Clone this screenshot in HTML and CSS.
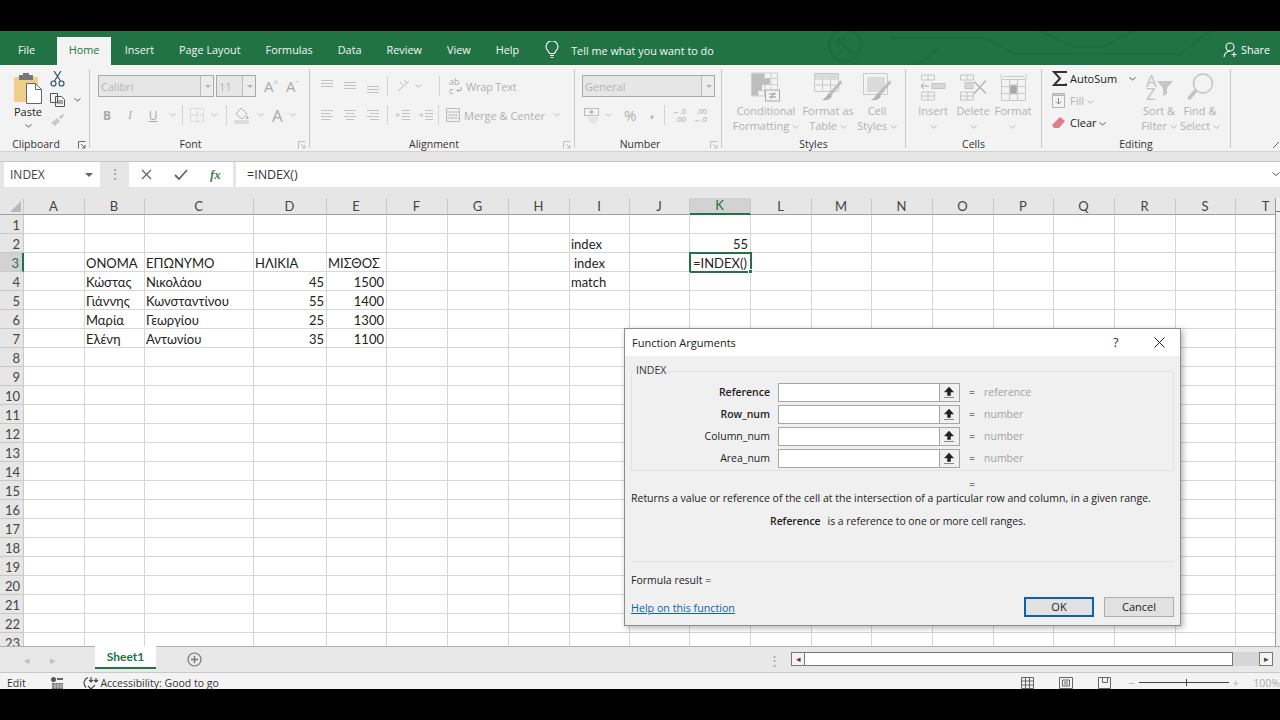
FILE: index.html
```html
<!DOCTYPE html>
<html lang="en">
<head>
<meta charset="utf-8">
<title>Excel - Function Arguments</title>
<link rel="stylesheet" href="styles.css">
</head>
<body>
<div class="app">
<header class="tabs">
  <svg class="circuit" width="480" height="34" viewBox="0 0 480 34" fill="none" stroke="#1e6d41" stroke-width="2.5"><circle cx="45" cy="14" r="16"/><path d="M38 8l14 14M38 8h8M38 8v8"/><path d="M90 7h95l30 16h165l30-23M240 0l35 16h28l30-16M118 34l22-18"/></svg>
  <nav class="tablist">
    <span class="tab">File</span><span class="tab active">Home</span><span class="tab">Insert</span><span class="tab">Page Layout</span><span class="tab">Formulas</span><span class="tab">Data</span><span class="tab">Review</span><span class="tab">View</span><span class="tab">Help</span>
    <svg class="bulb" width="14" height="18" viewBox="0 0 14 18" fill="none" stroke="#fff" stroke-width="1.1"><path d="M4.5 12.5C4 10 1 9 1 5.8a6 6 0 0 1 12 0C13 9 10 10 9.500 12.500zM5 14.500h4M5.700 16.500h2.600"/></svg>
    <span class="tell">Tell me what you want to do</span>
  </nav>
  <div class="share">
    <svg width="15" height="16" viewBox="0 0 15 16" fill="none" stroke="#fff" stroke-width="1.100"><circle cx="7" cy="5" r="4"/><path d="M1 15c.5-3.500 2.500-5.500 6-6M11 10v5M8.500 12.500h5"/></svg>
    <span>Share</span>
  </div>
</header>

<section class="ribbon">
  <div class="grp g-clip">
    <div class="body clip-body">
      <div class="paste">
        <svg width="30" height="31" viewBox="0 0 30 31"><rect x="1" y="4" width="24" height="25" rx="1" fill="#f0cf8a"/><rect x="6" y="2" width="14" height="5" fill="#777"/><rect x="10" y="0" width="6" height="4" fill="#777"/><path d="M13.500 10.500h9l6 6v14h-15z" fill="#fff" stroke="#666"/><path d="M22.500 10.500v6h6" fill="none" stroke="#666"/></svg>
        <span class="dark">Paste</span>
        <svg class="chev" width="7" height="4" viewBox="0 0 7 4"><path d="M.5.500l3 2.500 3-2.500" fill="none" stroke="#555"/></svg>
      </div>
      <div class="clip-tools">
        <svg width="15" height="16" viewBox="0 0 15 16" fill="none" stroke="#2f4f6a" stroke-width="1.200"><circle cx="3.500" cy="12.500" r="2.500"/><circle cx="11.500" cy="12.500" r="2.500"/><path d="M4.500 10L11 0M10.500 10L4 0"/></svg>
        <span class="copyline"><svg width="15" height="14" viewBox="0 0 15 14" fill="none" stroke="#555"><path d="M.5.500h7v9h-7zM5.500 3.500h6l3 3v7h-9zM7 8h6M7 10h6"/></svg><svg class="chev" width="7" height="4" viewBox="0 0 7 4"><path d="M.5.500l3 2.500 3-2.500" fill="none" stroke="#555"/></svg></span>
        <svg width="15" height="14" viewBox="0 0 15 14"><path d="M1 10l6-5 3 3-5 5z" fill="#c9c9c9"/><path d="M9 4l4-3 1 1-3 4z" fill="#bdbdbd"/></svg>
      </div>
    </div>
    <div class="lab lab-clip"><span class="lab-t">Clipboard</span><svg class="launch" width="8" height="8" viewBox="0 0 8 8" fill="none" stroke="#666"><path d="M.5 7.500v-7h7M3 3l4 4M7 4v3H4"/></svg></div>
  </div>

  <div class="grp g-font">
    <div class="body">
      <div class="row r1">
        <div class="combo c-font"><span>Calibri</span><i class="drop"></i></div>
        <div class="combo c-size"><span>11</span><i class="drop"></i></div>
        <span class="glyph gA1">A<sup>^</sup></span><span class="glyph gA2">A<sup>ˇ</sup></span>
      </div>
      <div class="row r2">
        <b class="fmt f-b">B</b><em class="fmt f-i">I</em><u class="fmt f-u">U</u>
        <svg class="chev c-u" width="7" height="4" viewBox="0 0 7 4"><path d="M.5.500l3 2.500 3-2.500" fill="none" stroke="#bbb"/></svg>
        <i class="vsep vs1"></i>
        <svg class="ic-border" width="14" height="14" viewBox="0 0 14 14" fill="none" stroke="#c4c4c4" stroke-dasharray="1 1"><path d="M.5.500h13v13H.5zM7 0v14M0 7h14"/></svg>
        <svg class="chev c-b" width="7" height="4" viewBox="0 0 7 4"><path d="M.5.500l3 2.500 3-2.500" fill="none" stroke="#bbb"/></svg>
        <i class="vsep vs2"></i>
        <svg class="ic-fill" width="16" height="17" viewBox="0 0 16 17"><path d="M7 1l6 6-5 5-6-5z" fill="none" stroke="#b5b5b5"/><path d="M13 8l2 4h-3z" fill="#b5b5b5"/><rect x="0" y="13" width="15" height="4" fill="#dcdcdc"/></svg>
        <svg class="chev c-f" width="7" height="4" viewBox="0 0 7 4"><path d="M.5.500l3 2.500 3-2.500" fill="none" stroke="#bbb"/></svg>
        <span class="glyph gA3">A</span>
        <svg class="chev c-a" width="7" height="4" viewBox="0 0 7 4"><path d="M.5.500l3 2.500 3-2.500" fill="none" stroke="#bbb"/></svg>
      </div>
    </div>
    <div class="lab lab-font"><span class="lab-t">Font</span><svg class="launch" width="8" height="8" viewBox="0 0 8 8" fill="none" stroke="#bbb"><path d="M.5 7.500v-7h7M3 3l4 4M7 4v3H4"/></svg></div>
  </div>

  <div class="grp g-align">
    <div class="body">
      <div class="row r1 al-r1">
        <svg class="al" width="14" height="14" viewBox="0 0 14 14" stroke="#c2c2c2"><path d="M1 1.500h12M1 4.500h12M1 7.500h12"/></svg>
        <svg class="al" width="14" height="14" viewBox="0 0 14 14" stroke="#c2c2c2"><path d="M1 3.500h12M1 6.500h12M1 9.500h12"/></svg>
        <svg class="al" width="14" height="14" viewBox="0 0 14 14" stroke="#c2c2c2"><path d="M1 7.500h12M1 10.500h12M1 13.500h12"/></svg>
        <i class="vsep as1"></i>
        <svg class="orient" width="15" height="14" viewBox="0 0 15 14" fill="none" stroke="#bdbdbd"><path d="M2 12L13 2M4 3l3 3M8 1l3 3"/></svg>
        <svg class="chev c-o" width="7" height="4" viewBox="0 0 7 4"><path d="M.5.500l3 2.500 3-2.500" fill="none" stroke="#bbb"/></svg>
        <i class="vsep as2"></i>
        <span class="abc">ab<br>c</span><svg class="ret" width="6" height="6" viewBox="0 0 6 6" fill="none" stroke="#aaa"><path d="M5 0v3.500H1M2.500 2L1 3.500 2.500 5"/></svg><span class="dis wrap">Wrap Text</span>
      </div>
      <div class="row r2 al-r2">
        <svg class="al" width="14" height="12" viewBox="0 0 14 12" stroke="#c2c2c2"><path d="M1 1.500h12M1 4.500h9M1 7.500h12M1 10.500h9"/></svg>
        <svg class="al" width="14" height="12" viewBox="0 0 14 12" stroke="#c2c2c2"><path d="M1 1.500h12M3 4.500h8M1 7.500h12M3 10.500h8"/></svg>
        <svg class="al" width="14" height="12" viewBox="0 0 14 12" stroke="#c2c2c2"><path d="M1 1.500h12M4 4.500h9M1 7.500h12M4 10.500h9"/></svg>
        <i class="vsep as1"></i>
        <svg class="ind" width="14" height="12" viewBox="0 0 14 12" stroke="#c2c2c2" fill="none"><path d="M6 1.500h8M6 4.500h8M6 7.500h8M6 10.500h8M4 6H0M2 4L0 6l2 2"/></svg>
        <svg class="ind2" width="14" height="12" viewBox="0 0 14 12" stroke="#c2c2c2" fill="none"><path d="M6 1.500h8M6 4.500h8M6 7.500h8M6 10.500h8M0 6h4M2 4l2 2-2 2"/></svg>
        <i class="vsep as3"></i>
        <svg class="merge" width="14" height="14" viewBox="0 0 14 14" fill="none" stroke="#bbb"><path d="M.5.500h13v13H.5zM.5 4h13M.5 10h13M3 7h8M4 6L3 7l1 1M10 6l1 1-1 1"/></svg>
        <span class="dis mergetxt">Merge &amp; Center</span>
        <svg class="chev c-m" width="7" height="4" viewBox="0 0 7 4"><path d="M.5.500l3 2.500 3-2.500" fill="none" stroke="#bbb"/></svg>
      </div>
    </div>
    <div class="lab lab-al"><span class="lab-t">Alignment</span><svg class="launch" width="8" height="8" viewBox="0 0 8 8" fill="none" stroke="#bbb"><path d="M.5 7.500v-7h7M3 3l4 4M7 4v3H4"/></svg></div>
  </div>

  <div class="grp g-num">
    <div class="body">
      <div class="row r1">
        <div class="combo c-gen"><span>General</span><i class="drop"></i></div>
      </div>
      <div class="row r2 num-r2">
        <svg class="acc" width="16" height="15" viewBox="0 0 16 15"><rect x=".5" y=".5" width="14" height="7" fill="none" stroke="#bbb"/><circle cx="7.500" cy="4" r="2" fill="#bbb"/><path d="M4 10h10M5 12h9M6 14h6" stroke="#d5d5d5"/></svg>
        <svg class="chev c-acc" width="7" height="4" viewBox="0 0 7 4"><path d="M.5.500l3 2.500 3-2.500" fill="none" stroke="#bbb"/></svg>
        <span class="dis pct">%</span><span class="dis comma">,</span>
        <i class="vsep ns1"></i>
        <span class="dec dec1">←.0<br>.00</span><span class="dec dec2">.00<br>→.0</span>
      </div>
    </div>
    <div class="lab lab-al"><span class="lab-t">Number</span><svg class="launch" width="8" height="8" viewBox="0 0 8 8" fill="none" stroke="#bbb"><path d="M.5 7.500v-7h7M3 3l4 4M7 4v3H4"/></svg></div>
  </div>

  <div class="grp g-styles">
    <div class="body bigs">
      <div class="big b-cond">
        <svg width="30" height="29" viewBox="0 0 30 29"><path d="M.5.500h26v23H.5zM7 .5v23M13.500.5v23M20 .5v23M.5 6h26M.5 12h26M.5 18h26" fill="none" stroke="#cfcfcf"/><path d="M1 1h12v5H1zM1 6h18v6H1zM1 12h10v6H1zM1 18h6v5H1z" fill="#bdbdbd"/><rect x="14.500" y="17.500" width="14" height="11" fill="#f3f3f3" stroke="#a9a9a9"/><path d="M18 21.500h7M18 24.500h7M23 20l-3 6" stroke="#999"/></svg>
        <span>Conditional<br>Formatting <svg class="chev" width="7" height="4" viewBox="0 0 7 4"><path d="M.5.500l3 2.500 3-2.500" fill="none" stroke="#bbb"/></svg></span>
      </div>
      <div class="big b-fmt">
        <svg width="29" height="28" viewBox="0 0 29 28"><path d="M.5.500h24v18H.5zM.5 6h24M.5 12h24M8.500.5v18M16.500.5v18" fill="none" stroke="#c9c9c9"/><path d="M1 1h23v5H1z" fill="#dadada"/><path d="M27 7L15 20l2 3 11-13z" fill="#bdbdbd"/><path d="M15 20c-2 2-3 5-7 7 5 1 9-1 10-4z" fill="#b3b3b3"/></svg>
        <span>Format as<br>Table <svg class="chev" width="7" height="4" viewBox="0 0 7 4"><path d="M.5.500l3 2.500 3-2.500" fill="none" stroke="#bbb"/></svg></span>
      </div>
      <div class="big b-cell">
        <svg width="29" height="28" viewBox="0 0 29 28"><path d="M.5.500h24v21H.5z" fill="none" stroke="#c9c9c9"/><rect x="4" y="4" width="18" height="15" fill="#dadada"/><path d="M27 7L15 20l2 3 11-13z" fill="#bdbdbd"/><path d="M15 20c-2 2-3 5-7 7 5 1 9-1 10-4z" fill="#b3b3b3"/></svg>
        <span>Cell<br>Styles <svg class="chev" width="7" height="4" viewBox="0 0 7 4"><path d="M.5.500l3 2.500 3-2.500" fill="none" stroke="#bbb"/></svg></span>
      </div>
    </div>
    <div class="lab"><span class="lab-t">Styles</span></div>
  </div>

  <div class="grp g-cells">
    <div class="body bigs">
      <div class="big b-ins">
        <svg width="26" height="27" viewBox="0 0 26 27" fill="none" stroke="#c4c4c4"><path d="M1.500 1.500h13v5h-13zM8 1.500v5M1.500 18.500h13v8h-13zM8 18.500v8M1.500 22.500h13"/><path d="M1 12.500h8M4 9.500l-3 3 3 3" stroke="#aaa"/><rect x="12" y="10" width="13" height="5" fill="#d8d8d8" stroke="#c4c4c4"/></svg>
        <span>Insert<br><svg class="chev" width="7" height="4" viewBox="0 0 7 4"><path d="M.5.500l3 2.500 3-2.500" fill="none" stroke="#bbb"/></svg></span>
      </div>
      <div class="big b-del">
        <svg width="28" height="27" viewBox="0 0 28 27" fill="none" stroke="#c4c4c4"><path d="M1.500 1.500h13v5h-13zM8 1.500v5M1.500 18.500h13v8h-13zM8 18.500v8M1.500 22.500h13"/><rect x="6" y="9" width="8" height="6" fill="#d8d8d8"/><path d="M15 8l12 12M27 7L15 20" stroke="#b5b5b5" stroke-width="1.500"/></svg>
        <span>Delete<br><svg class="chev" width="7" height="4" viewBox="0 0 7 4"><path d="M.5.500l3 2.500 3-2.500" fill="none" stroke="#bbb"/></svg></span>
      </div>
      <div class="big b-form">
        <svg width="27" height="28" viewBox="0 0 27 28" fill="none" stroke="#c9c9c9"><path d="M1 1v5M26 1v5M3 3.500h21M1.500 6.500h24v21H1.500zM9.500 6.500v21M17.500 6.500v21M1.500 13.500h24M1.500 20.500h24"/><rect x="10" y="12" width="7" height="9" fill="#a9a9a9"/></svg>
        <span>Format<br><svg class="chev" width="7" height="4" viewBox="0 0 7 4"><path d="M.5.500l3 2.500 3-2.500" fill="none" stroke="#bbb"/></svg></span>
      </div>
    </div>
    <div class="lab"><span class="lab-t">Cells</span></div>
  </div>

  <div class="grp g-edit">
    <div class="body edit-body">
      <div class="edit-list">
        <div class="eline"><svg width="15" height="15" viewBox="0 0 15 15" fill="none" stroke="#333" stroke-width="2"><path d="M14 2V1H2l6 6.500L2 14h12v-1.500"/></svg><span class="dark">AutoSum</span><svg class="chev c-auto" width="7" height="4" viewBox="0 0 7 4"><path d="M.5.500l3 2.500 3-2.500" fill="none" stroke="#555"/></svg></div>
        <div class="eline"><svg width="13" height="15" viewBox="0 0 13 15" fill="none" stroke="#b5b5b5"><path d="M.5 2.500h12v12H.5z"/><path d="M.5.500h12v2H.5z" fill="#ccc"/><path d="M6.500 5v6M4 8.500l2.500 2.500L9 8.500" stroke="#888"/></svg><span class="dis">Fill <svg class="chev" width="7" height="4" viewBox="0 0 7 4"><path d="M.5.500l3 2.500 3-2.500" fill="none" stroke="#bbb"/></svg></span></div>
        <div class="eline"><svg width="13" height="12" viewBox="0 0 13 12"><path d="M8 0l5 4-6 7-5 0-2-3z" fill="#dd7e8a"/></svg><span class="dark">Clear <svg class="chev" width="7" height="4" viewBox="0 0 7 4"><path d="M.5.500l3 2.500 3-2.500" fill="none" stroke="#555"/></svg></span></div>
      </div>
      <div class="big b-sort">
        <svg width="30" height="28" viewBox="0 0 30 28"><text x="2" y="14" class="azt">A</text><text x="2" y="27" class="azt">Z</text><path d="M13 8h16l-6 7v6l-4 2v-8z" fill="#c6c6c6"/></svg>
        <span>Sort &amp;<br>Filter <svg class="chev" width="7" height="4" viewBox="0 0 7 4"><path d="M.5.500l3 2.500 3-2.500" fill="none" stroke="#bbb"/></svg></span>
      </div>
      <div class="big b-find">
        <svg width="27" height="28" viewBox="0 0 27 28" fill="none" stroke="#c2c2c2"><circle cx="16" cy="10.500" r="9.500" stroke-width="1.400"/><path d="M9 17.500L1.500 26" stroke-width="3.500"/></svg>
        <span>Find &amp;<br>Select <svg class="chev" width="7" height="4" viewBox="0 0 7 4"><path d="M.5.500l3 2.500 3-2.500" fill="none" stroke="#bbb"/></svg></span>
      </div>
    </div>
    <div class="lab"><span class="lab-t">Editing</span></div>
  </div>
  <svg class="collapse" width="6" height="6" viewBox="0 0 6 6"><path d="M0 6l6-6" stroke="#666"/></svg>
</section>

<section class="fbar">
  <div class="namebox"><span>INDEX</span><i class="ndrop"></i></div>
  <span class="fdots">⋮</span>
  <div class="fbtns">
    <svg width="11" height="11" viewBox="0 0 11 11" stroke="#666" stroke-width="1.300"><path d="M1 1l9 9M10 1l-9 9"/></svg>
    <svg width="14" height="11" viewBox="0 0 14 11" fill="none" stroke="#666" stroke-width="1.800"><path d="M1 6l4 4 8-9"/></svg>
    <span class="fx">fx</span>
  </div>
  <div class="finput"><span>=INDEX()</span><svg class="fchev" width="8" height="5" viewBox="0 0 8 5"><path d="M.5.500l3.500 3 3.500-3" fill="none" stroke="#555"/></svg></div>
</section>

<main class="sheetwrap">
<div class="gridclip">
<table class="sheet">
<colgroup><col class="w24"><col class="w61"><col class="w60"><col class="w109"><col class="w73"><col class="w60"><col class="w61"><col class="w61"><col class="w61"><col class="w60"><col class="w60"><col class="w61"><col class="w61"><col class="w60"><col class="w61"><col class="w61"><col class="w60"><col class="w61"><col class="w61"><col class="w60"><col class="w61"></colgroup>
<thead><tr><th class="corner"><i class="tri"></i></th><th>A</th><th>B</th><th>C</th><th>D</th><th>E</th><th>F</th><th>G</th><th>H</th><th>I</th><th>J</th><th class="hsel">K</th><th>L</th><th>M</th><th>N</th><th>O</th><th>P</th><th>Q</th><th>R</th><th>S</th><th>T</th></tr></thead>
<tbody>
<tr><th>1</th><td></td><td></td><td></td><td></td><td></td><td></td><td></td><td></td><td></td><td></td><td></td><td></td><td></td><td></td><td></td><td></td><td></td><td></td><td></td><td></td></tr>
<tr><th>2</th><td></td><td></td><td></td><td></td><td></td><td></td><td></td><td></td><td>index</td><td></td><td class="n">55</td><td></td><td></td><td></td><td></td><td></td><td></td><td></td><td></td><td></td></tr>
<tr><th class="rsel">3</th><td></td><td>ΟΝΟΜΑ</td><td>ΕΠΩΝΥΜΟ</td><td>ΗΛΙΚΙΑ</td><td>ΜΙΣΘΟΣ</td><td></td><td></td><td></td><td class="ind-cell">index</td><td></td><td class="cursor">=INDEX()<i class="handle"></i></td><td></td><td></td><td></td><td></td><td></td><td></td><td></td><td></td><td></td></tr>
<tr><th>4</th><td></td><td>Κώστας</td><td>Νικολάου</td><td class="n">45</td><td class="n">1500</td><td></td><td></td><td></td><td>match</td><td></td><td></td><td></td><td></td><td></td><td></td><td></td><td></td><td></td><td></td><td></td></tr>
<tr><th>5</th><td></td><td>Γιάννης</td><td>Κωνσταντίνου</td><td class="n">55</td><td class="n">1400</td><td></td><td></td><td></td><td></td><td></td><td></td><td></td><td></td><td></td><td></td><td></td><td></td><td></td><td></td><td></td></tr>
<tr><th>6</th><td></td><td>Μαρία</td><td>Γεωργίου</td><td class="n">25</td><td class="n">1300</td><td></td><td></td><td></td><td></td><td></td><td></td><td></td><td></td><td></td><td></td><td></td><td></td><td></td><td></td><td></td></tr>
<tr><th>7</th><td></td><td>Ελένη</td><td>Αντωνίου</td><td class="n">35</td><td class="n">1100</td><td></td><td></td><td></td><td></td><td></td><td></td><td></td><td></td><td></td><td></td><td></td><td></td><td></td><td></td><td></td></tr>
<tr><th>8</th><td></td><td></td><td></td><td></td><td></td><td></td><td></td><td></td><td></td><td></td><td></td><td></td><td></td><td></td><td></td><td></td><td></td><td></td><td></td><td></td></tr>
<tr><th>9</th><td></td><td></td><td></td><td></td><td></td><td></td><td></td><td></td><td></td><td></td><td></td><td></td><td></td><td></td><td></td><td></td><td></td><td></td><td></td><td></td></tr>
<tr><th>10</th><td></td><td></td><td></td><td></td><td></td><td></td><td></td><td></td><td></td><td></td><td></td><td></td><td></td><td></td><td></td><td></td><td></td><td></td><td></td><td></td></tr>
<tr><th>11</th><td></td><td></td><td></td><td></td><td></td><td></td><td></td><td></td><td></td><td></td><td></td><td></td><td></td><td></td><td></td><td></td><td></td><td></td><td></td><td></td></tr>
<tr><th>12</th><td></td><td></td><td></td><td></td><td></td><td></td><td></td><td></td><td></td><td></td><td></td><td></td><td></td><td></td><td></td><td></td><td></td><td></td><td></td><td></td></tr>
<tr><th>13</th><td></td><td></td><td></td><td></td><td></td><td></td><td></td><td></td><td></td><td></td><td></td><td></td><td></td><td></td><td></td><td></td><td></td><td></td><td></td><td></td></tr>
<tr><th>14</th><td></td><td></td><td></td><td></td><td></td><td></td><td></td><td></td><td></td><td></td><td></td><td></td><td></td><td></td><td></td><td></td><td></td><td></td><td></td><td></td></tr>
<tr><th>15</th><td></td><td></td><td></td><td></td><td></td><td></td><td></td><td></td><td></td><td></td><td></td><td></td><td></td><td></td><td></td><td></td><td></td><td></td><td></td><td></td></tr>
<tr><th>16</th><td></td><td></td><td></td><td></td><td></td><td></td><td></td><td></td><td></td><td></td><td></td><td></td><td></td><td></td><td></td><td></td><td></td><td></td><td></td><td></td></tr>
<tr><th>17</th><td></td><td></td><td></td><td></td><td></td><td></td><td></td><td></td><td></td><td></td><td></td><td></td><td></td><td></td><td></td><td></td><td></td><td></td><td></td><td></td></tr>
<tr><th>18</th><td></td><td></td><td></td><td></td><td></td><td></td><td></td><td></td><td></td><td></td><td></td><td></td><td></td><td></td><td></td><td></td><td></td><td></td><td></td><td></td></tr>
<tr><th>19</th><td></td><td></td><td></td><td></td><td></td><td></td><td></td><td></td><td></td><td></td><td></td><td></td><td></td><td></td><td></td><td></td><td></td><td></td><td></td><td></td></tr>
<tr><th>20</th><td></td><td></td><td></td><td></td><td></td><td></td><td></td><td></td><td></td><td></td><td></td><td></td><td></td><td></td><td></td><td></td><td></td><td></td><td></td><td></td></tr>
<tr><th>21</th><td></td><td></td><td></td><td></td><td></td><td></td><td></td><td></td><td></td><td></td><td></td><td></td><td></td><td></td><td></td><td></td><td></td><td></td><td></td><td></td></tr>
<tr><th>22</th><td></td><td></td><td></td><td></td><td></td><td></td><td></td><td></td><td></td><td></td><td></td><td></td><td></td><td></td><td></td><td></td><td></td><td></td><td></td><td></td></tr>
<tr><th>23</th><td></td><td></td><td></td><td></td><td></td><td></td><td></td><td></td><td></td><td></td><td></td><td></td><td></td><td></td><td></td><td></td><td></td><td></td><td></td><td></td></tr>
</tbody>
</table>
</div>
<div class="vscroll"><span class="vup"></span></div>

<div class="dialog" role="dialog">
  <div class="dtitle"><span>Function Arguments</span><span class="dq">?</span><svg class="dx" width="11" height="11" viewBox="0 0 11 11" stroke="#222"><path d="M.5.500l10 10M10.500.500l-10 10"/></svg></div>
  <div class="dbody">
    <fieldset class="frame">
      <legend>INDEX</legend>
      <div class="arg"><label class="bold">Reference</label><div class="inp"><i class="fld"></i><span class="up"><svg width="10" height="11" viewBox="0 0 10 11"><path d="M5 0l4.500 5H6.500v3.500h-3V5H.5zM0 10.500h10" fill="#222" stroke="#222" stroke-width=".5"/></svg></span></div><span class="eq">=</span><span class="hint">reference</span></div>
      <div class="arg"><label class="bold">Row_num</label><div class="inp"><i class="fld"></i><span class="up"><svg width="10" height="11" viewBox="0 0 10 11"><path d="M5 0l4.500 5H6.500v3.500h-3V5H.5zM0 10.500h10" fill="#222" stroke="#222" stroke-width=".5"/></svg></span></div><span class="eq">=</span><span class="hint">number</span></div>
      <div class="arg"><label>Column_num</label><div class="inp"><i class="fld"></i><span class="up"><svg width="10" height="11" viewBox="0 0 10 11"><path d="M5 0l4.500 5H6.500v3.500h-3V5H.5zM0 10.500h10" fill="#222" stroke="#222" stroke-width=".5"/></svg></span></div><span class="eq">=</span><span class="hint">number</span></div>
      <div class="arg"><label>Area_num</label><div class="inp"><i class="fld"></i><span class="up"><svg width="10" height="11" viewBox="0 0 10 11"><path d="M5 0l4.500 5H6.500v3.500h-3V5H.5zM0 10.500h10" fill="#222" stroke="#222" stroke-width=".5"/></svg></span></div><span class="eq">=</span><span class="hint">number</span></div>
    </fieldset>
    <div class="eqline">=</div>
    <p class="desc">Returns a value or reference of the cell at the intersection of a particular row and column, in a given range.</p>
    <p class="argdesc"><b>Reference</b><span>is a reference to one or more cell ranges.</span></p>
    <hr class="dsep">
    <p class="result">Formula result =</p>
    <div class="dfoot"><a class="help">Help on this function</a><span class="dbtn ok">OK</span><span class="dbtn">Cancel</span></div>
  </div>
</div>
</main>

<section class="sheetbar">
  <span class="nav">◂</span><span class="nav">▸</span>
  <span class="stab">Sheet1</span>
  <svg class="plus" width="15" height="15" viewBox="0 0 15 15" fill="none" stroke="#777"><circle cx="7.500" cy="7.500" r="6.500" stroke-width="1.200"/><path d="M7.500 4v7M4 7.500h7" stroke-width="1.400"/></svg>
  <span class="sdots">⋮</span>
  <div class="hscroll"><span class="harrow">◂</span><span class="hthumb"></span><span class="htrack"></span><span class="harrow">▸</span></div>
</section>

<footer class="status">
  <span class="edit">Edit</span>
  <svg class="macro" width="12" height="12" viewBox="0 0 12 12" fill="#555"><circle cx="2.500" cy="2.500" r="2.500"/><path d="M6 1h6v2H6zM1 6h11v6H1z" fill="#666"/><path d="M1 8h11M1 10h11M4 6v6M7 6v6M10 6v6" stroke="#f3f3f3" stroke-width=".6"/></svg>
  <svg class="access" width="16" height="14" viewBox="0 0 16 14" fill="none" stroke="#444"><path d="M5 1.500a6 6 0 0 0-2 10M8 1v5M6 4l2 2 2-2M11 4l2 2 2-2M13 2v4M5 10l3 3 4-4" stroke-width="1.100"/></svg>
  <span class="acc-t">Accessibility: Good to go</span>
  <div class="views">
    <svg width="13" height="12" viewBox="0 0 13 12" fill="none" stroke="#666"><path d="M.5.500h12v11H.5zM4.500.5v11M8.500.5v11M.5 4h12M.5 8h12"/></svg>
    <svg width="14" height="12" viewBox="0 0 14 12" fill="none" stroke="#666"><path d="M.5.500h13v11H.5zM3.500 3h7v6h-7zM5 5h4M5 7h4"/></svg>
    <svg width="13" height="12" viewBox="0 0 13 12" fill="none" stroke="#666"><path d="M.5.500h12v11H.5zM4.500.5v5h5v-5"/></svg>
  </div>
  <span class="zm zm1">−</span><span class="slider"><i></i></span><span class="zm">+</span><span class="pct100">100%</span>
</footer>
</div>
</body>
</html>
```

FILE: styles.css
```css
* { box-sizing: border-box; }
html, body { margin: 0; padding: 0; background: #000; }
body { width: 1280px; height: 720px; overflow: hidden; font-family: "Open Sans", "Noto Sans", sans-serif; font-size: 11px; color: #333; }
i { font-style: normal; }
svg { display: block; flex: none; }
.chev { display: inline-block; vertical-align: middle; }
.app { margin-top: 31px; height: 658px; display: flex; flex-direction: column; background: #e6e6e6; }

/* title tabs */
.tabs { height: 34px; background: #217346; display: flex; align-items: flex-end; position: relative; color: #fff; flex: none; overflow: hidden; }
.circuit { position: absolute; right: 0; top: 0; }
.tablist { display: flex; align-items: center; height: 28px; padding-left: 18px; position: relative; flex: 1; }
.tab { font-size: 10.850px; line-height: 26px; height: 28px; margin-right: 25px; white-space: nowrap; color: #f2f7f4; }
.tab.active { background: #f3f3f3; color: #217346; padding: 0 12px; margin: 0 13.500px 0 -3.500px; }
.bulb { margin: -2px 12px 0 1px; }
.tell { font-size: 10.850px; color: #f2f7f4; margin-top: -2px; }
.share { position: relative; display: flex; align-items: center; gap: 3px; height: 26px; margin-bottom: 2px; padding-right: 10px; font-size: 10.750px; }

/* ribbon */
.ribbon { height: 87px; background: #f3f3f3; display: flex; padding-top: 4px; flex: none; border-bottom: 1px solid #d2d2d2; position: relative; color: #aaa; }
.grp { display: flex; flex-direction: column; height: 79px; border-right: 1px solid #c8c8c8; flex: none; }
.g-clip { width: 90px; }
.g-font { width: 220px; }
.g-align { width: 265px; }
.g-num { width: 147px; }
.g-styles { width: 184px; }
.g-cells { width: 136px; }
.g-edit { width: 189px; }
.body { flex: 1; min-height: 0; }
.lab { height: 15px; margin-bottom: -3px; position: relative; display: flex; justify-content: center; align-items: center; }
.lab-t { color: #333; font-size: 10.500px; }
.lab-clip .lab-t { margin-right: 17px; }
.lab-font .lab-t { margin-right: 18px; }
.lab-al .lab-t { margin-right: 16px; }
.launch { position: absolute; right: 3px; top: 5px; }
.dark { color: #222; }
.dis { color: #b0b0b0; }
.collapse { position: absolute; right: 1px; bottom: 3px; }

.clip-body { display: flex; padding: 4px 0 0 13px; }
.paste { display: flex; flex-direction: column; align-items: center; width: 30px; font-size: 11px; }
.paste span { line-height: 15px; }
.paste .chev { margin-top: 5px; }
.clip-tools { display: flex; flex-direction: column; gap: 6px; padding: 0 0 0 7px; margin-top: -2px; }
.copyline { display: flex; align-items: center; gap: 9px; }

.row { display: flex; align-items: center; position: relative; height: 22px; }
.r1 { margin-top: 6px; padding-left: 8px; }
.r2 { margin-top: 7px; padding-left: 8px; }
.combo { height: 22px; border: 1px solid #a8a8a8; background: #e6e6e6; display: flex; align-items: center; color: #b4b4b4; padding-left: 2px; font-size: 11px; }
.combo span { flex: 1; }
.drop { width: 13px; height: 20px; border-left: 1px solid #bdbdbd; position: relative; background: #ececec; }
.drop::after { content: ""; position: absolute; left: 4px; top: 9px; border: 3px solid transparent; border-top-color: #b4b4b4; }
.c-font { width: 116px; }
.c-size { width: 40px; margin-left: 2px; }
.c-gen { width: 133px; margin-left: -1px; }
.glyph { font-size: 15px; color: #a9a9a9; line-height: 1; display: block; }
.glyph sup { font-size: 8px; vertical-align: 6px; line-height: 0; }
.gA1 { margin-left: 8px; width: 22px; }
.gA2 { width: 18px; }
.fmt { font-size: 12px; width: 10px; text-align: center; color: #a9a9a9; font-family: "Liberation Serif", serif; }
.f-b { margin-left: 4px; font-family: "Open Sans", sans-serif; }
.f-i { margin-left: 13px; }
.f-u { margin-left: 13px; font-family: "Open Sans", sans-serif; }
.c-u { margin-left: 11px; }
.vsep { display: block; width: 1px; height: 20px; background: #d3d3d3; flex: none; }
.vs1 { margin-left: 6px; }
.ic-border { margin-left: 7px; }
.c-b { margin-left: 7px; }
.vs2 { margin-left: 8px; }
.ic-fill { margin-left: 7px; }
.c-f { margin-left: 7px; }
.gA3 { margin-left: 8px; font-size: 17px; }
.c-a { margin-left: 6px; }

.al-r1, .al-r2 { padding-left: 10px; }
.al { margin-right: 9px; }
.al-r1 { margin-top: 6px; }
.as1 { margin-left: -2px; }
.orient { margin-left: 8px; }
.c-o { margin-left: 4px; }
.as2 { margin-left: 17px; }
.abc { font-size: 9px; line-height: 9px; margin-left: 9px; width: 6px; color: #aaa; }
.ret { margin: 7px 4px 0 1px; }
.wrap { font-size: 11px; letter-spacing: -.2px; }
.ind { margin-left: 8px; }
.ind2 { margin-left: 9px; }
.as3 { margin-left: 5px; }
.merge { margin-left: 7px; }
.mergetxt { margin-left: 4px; font-size: 11px; white-space: nowrap; }
.c-m { margin-left: 8px; }

.num-r2 { padding-left: 9px; }
.c-acc { margin-left: 5px; }
.pct { font-size: 15px; margin-left: 12px; width: 16px; }
.comma { font-size: 15px; font-weight: 700; margin-left: 10px; width: 8px; margin-top: -8px; }
.ns1 { margin-left: 6px; }
.dec { font-size: 7.500px; line-height: 8px; width: 15px; color: #aaa; text-align: right; white-space: nowrap; }
.dec1 { margin-left: 6px; }
.dec2 { margin-left: 6px; }

.bigs { display: flex; padding-top: 2px; }
.big { display: flex; flex-direction: column; align-items: center; font-size: 11px; line-height: 15px; color: #b0b0b0; text-align: center; flex: none; }
.big > svg { height: 32px; }
.big > span { white-space: nowrap; }
.b-cond { width: 80px; margin-left: 4px; }
.b-fmt { width: 60px; margin-left: -8px; }
.b-cell { width: 40px; margin-left: -1px; }
.b-ins { width: 40px; margin-left: 7px; }
.b-del { width: 40px; }
.b-form { width: 40px; }

.edit-body { display: flex; }
.edit-list { width: 97px; padding-left: 10px; display: flex; flex-direction: column; gap: 3px; font-size: 11px; }
.eline { display: flex; align-items: center; gap: 5px; height: 19px; white-space: nowrap; }
.eline:first-child { gap: 3px; }
.c-auto { margin-left: 9px; }
.b-sort { width: 40px; padding-top: 2px; }
.azt { font-size: 17px; fill: #c2c2c2; font-family: "Open Sans", sans-serif; }
.b-find { width: 42px; padding-top: 2px; }

/* formula bar */
.fbar { height: 46px; padding: 10px 0 11px 4px; display: flex; align-items: stretch; flex: none; background: #e6e6e6; position: relative; }
.fbar::before { content: ""; position: absolute; left: 0; right: 0; top: 9px; height: 1px; background: #c6c6c6; }
.namebox { width: 96px; background: #fff; display: flex; align-items: center; justify-content: space-between; padding: 0 7px 0 6px; font-size: 12px; color: #444; }
.ndrop { border: 4px solid transparent; border-top-color: #666; border-bottom: 0; }
.fdots { width: 29px; text-align: center; color: #999; font-size: 14px; line-height: 24px; }
.fbtns { width: 104px; background: #fff; display: flex; align-items: center; gap: 22px; padding-left: 12px; }
.fx { font-family: "Liberation Serif", serif; font-style: italic; font-weight: 700; font-size: 13px; color: #4d7c5f; }
.finput { flex: 1; margin-left: 3px; background: #fff; display: flex; align-items: center; justify-content: space-between; padding-left: 11px; font-size: 12.500px; color: #333; }

/* sheet */
.sheetwrap { height: 448px; position: relative; overflow: hidden; background: #fff; display: flex; flex: none; }
.gridclip { width: 1275px; overflow: hidden; flex: none; }
.sheet { border-collapse: separate; border-spacing: 0; table-layout: fixed; width: 1296px; font-family: "Lato", "Noto Sans", sans-serif; font-size: 13px; color: #222; }
.w24 { width: 24px; } .w60 { width: 60px; } .w61 { width: 61px; } .w73 { width: 73px; } .w109 { width: 109px; }
.sheet tr { height: 19px; }
.sheet thead tr { height: 17px; }
.sheet td { border-right: 1px solid #d6d6d6; border-bottom: 1px solid #d6d6d6; padding: 2px 2px 0 1px; white-space: nowrap; overflow: visible; line-height: 16px; height: 19px; position: relative; }
.sheet th { background: #e6e6e6; font-weight: 400; border-right: 1px solid #c8c8c8; border-bottom: 1px solid #c8c8c8; padding: 0; font-size: 13px; color: #444; height: 19px; line-height: 16px; }
.sheet thead th { height: 17px; line-height: 15px; border-bottom: 1px solid #a0a0a0; padding-right: 1px; }
.sheet tbody th { text-align: right; padding: 2px 3px 0 0; }
.corner { position: relative; }
.tri { position: absolute; right: 2px; bottom: 2px; border-style: solid; border-width: 0 0 11px 11px; border-color: transparent transparent #b9b9b9 transparent; }
.sheet td.n { text-align: right; padding-right: 2px; }
.sheet td.ind-cell { padding-left: 4px; }
.sheet thead th.hsel { background: #d2d2d2; border-bottom: 2px solid #217346; color: #217346; }
.sheet tbody th.rsel { background: #d2d2d2; border-right: 2px solid #217346; color: #217346; }
.sheet td.cursor { outline: 2px solid #217346; outline-offset: -1px; padding-left: 3px; }
.handle { position: absolute; right: -3px; bottom: -3px; width: 5px; height: 5px; background: #217346; border: 1px solid #fff; z-index: 2; }
.vscroll { flex: 1; background: #f0f0f0; border-left: 1px solid #9a9a9a; }
.vup { display: block; height: 14px; border-bottom: 1px solid #777; }

/* dialog */
.dialog { position: absolute; left: 624px; top: 130px; width: 557px; height: 298px; background: #f0f0f0; border: 1px solid #8d8d8d; box-shadow: 2px 2px 6px rgba(0,0,0,.3); display: flex; flex-direction: column; color: #222; }
.dtitle { height: 27px; background: #fff; display: flex; align-items: center; padding-left: 7px; font-size: 11px; flex: none; position: relative; }
.dq { position: absolute; left: 488px; top: 4px; font-size: 13px; color: #333; }
.dx { position: absolute; left: 529px; top: 8px; }
.dbody { flex: 1; padding: 0 6px; display: flex; flex-direction: column; min-height: 0; font-size: 10.500px; }
.frame { margin: 8px 0 0 0; padding: 3px 0 0 0; border: 1px solid #e2e2e2; height: 107px; position: relative; flex: none; }
.frame legend { font-size: 10.500px; padding: 0 1px; margin-left: 3px; height: 14px; line-height: 13px; color: #333; }
.arg { display: flex; align-items: center; height: 22px; font-size: 10.500px; }
.arg label { width: 138px; text-align: right; }
.arg .bold { font-weight: 600; }
.inp { margin-left: 8px; width: 182px; height: 19px; display: flex; border: 1px solid #a6a6a6; background: #fff; }
.fld { flex: 1; }
.up { width: 20px; border-left: 1px solid #a6a6a6; background: #f0f0f0; display: flex; align-items: center; justify-content: center; padding-right: 1px; }
.eq { width: 24px; text-align: center; }
.hint { color: #a0a0a0; }
.eqline { margin-top: 7px; height: 13px; line-height: 13px; padding-left: 338px; }
.desc { margin: 0; line-height: 15px; white-space: nowrap; }
.argdesc { margin: 8px 0 0; line-height: 15px; padding-left: 139px; display: flex; gap: 7px; white-space: nowrap; font-size: 10.400px; }
.argdesc b { font-weight: 600; }
.dsep { margin: 32px 0 0; border: 0; border-top: 1px solid #e2e2e2; width: 100%; }
.result { margin: 11px 0 0; line-height: 15px; }
.dfoot { display: flex; align-items: center; margin-top: 9px; gap: 10px; }
.help { color: #0b66a8; text-decoration: underline; font-size: 10.700px; flex: 1; margin-top: 2px; }
.dbtn { width: 70px; height: 20px; background: #e1e1e1; border: 1px solid #adadad; text-align: center; line-height: 18px; font-size: 11px; }
.ok { border: 2px solid #0a64ad; line-height: 16px; }

/* tabs bar */
.sheetbar { height: 27px; background: #e8e8e8; border-top: 1px solid #b0b0b0; display: flex; align-items: center; position: relative; flex: none; border-bottom: 1px solid #c8c8c8; }
.nav { color: #c0c0c0; width: 26px; text-align: center; font-size: 11px; }
.nav:first-child { margin-left: 14px; }
.stab { margin-left: 29px; width: 61px; height: 23px; margin-top: -4px; background: #fff; border-bottom: 2px solid #217346; color: #217346; font-weight: 700; text-align: center; line-height: 22px; font-size: 12px; font-family: "Lato", "Noto Sans", sans-serif; }
.plus { margin-left: 31px; }
.sdots { margin-left: 566px; width: 8px; color: #999; font-size: 13px; }
.hscroll { margin-left: 15px; width: 482px; height: 14px; display: flex; margin-top: -1px; }
.harrow { width: 14px; background: #f4f4f4; border: 1px solid #777; text-align: center; font-size: 9px; line-height: 12px; color: #444; }
.hthumb { width: 428px; background: #fff; border: 1px solid #777; border-left: 0; }
.htrack { flex: 1; background: #d6d6d6; }

/* status */
.status { flex: 1; background: #f3f3f3; display: flex; align-items: center; font-size: 10.500px; color: #333; overflow: hidden; padding-top: 3px; }
.edit { margin-left: 7px; width: 47px; }
.macro { margin-right: 17px; }
.access { margin-left: 3px; }
.acc-t { margin-left: 1px; white-space: nowrap; }
.views { margin-left: 802px; display: flex; gap: 25px; }
.zm { color: #aaa; width: 10px; text-align: center; font-size: 11px; line-height: 13px; }
.zm1 { margin-left: 16px; }
.slider { width: 95px; height: 1px; background: #444; margin: 0 2px 0 3px; position: relative; }
.slider i { position: absolute; left: 47px; top: -3px; width: 1px; height: 7px; background: #444; }
.pct100 { color: #aaa; margin-left: 13px; white-space: nowrap; }
```
